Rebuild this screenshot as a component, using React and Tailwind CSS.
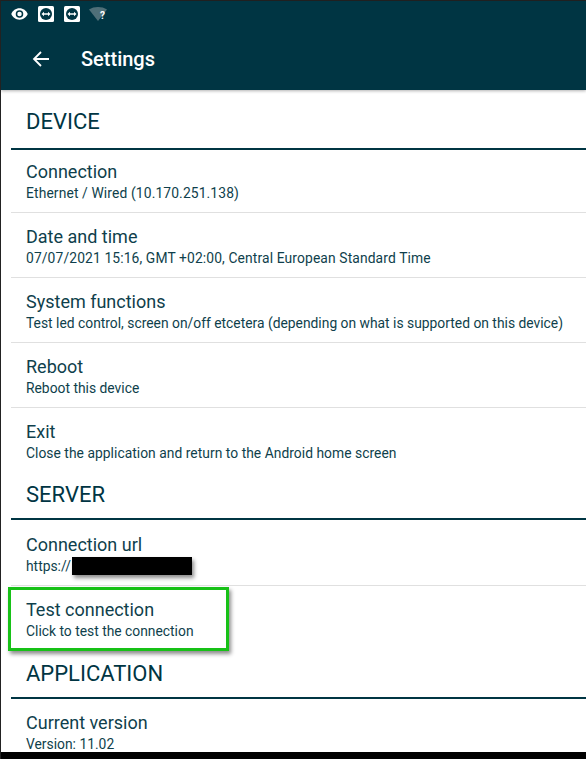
const C = "text-[#0f3f4c]";

function Heading({ children, className = "" }) {
  return (
    <div className={`ml-[10px] border-b-2 border-[#003543] pl-[15px] ${className}`}>
      <div className="text-[22px] leading-[26px] text-[#003543]">{children}</div>
    </div>
  );
}

function Row({ title, sub, divider = true, className = "", subClass = "", children }) {
  return (
    <div className={`ml-[10px] pl-[15px] ${divider ? "border-b border-[#e0e0e0]" : ""} ${className}`}>
      <div className={`text-[18px] leading-[22px] ${C}`}>{title}</div>
      <div className={`flex items-center whitespace-nowrap text-[13.85px] leading-[20px] ${C} ${subClass}`}>
        {sub}
        {children}
      </div>
    </div>
  );
}

function TeamViewer() {
  return (
    <svg width="16" height="16" viewBox="0 0 16 16">
      <rect width="16" height="16" rx="1.5" fill="#fff" />
      <circle cx="8" cy="8" r="6" fill="#003543" />
      <path d="M3.5 8 6 5.800V7.200h4V5.800L12.500 8 10 10.200V8.800H6v1.400z" fill="#fff" />
    </svg>
  );
}

export default function App() {
  return (
    <div className="flex h-[759px] w-[586px] flex-col overflow-hidden border-l border-[#222] bg-white font-['Roboto',sans-serif]">
      <div className="h-px shrink-0 bg-[#222]" />
      <header className="z-10 h-[89px] shrink-0 bg-[#003543] pl-[10px] shadow-[0_1px_3px_rgba(0,0,0,0.3)]">
        <div className="flex h-[26px] items-center gap-[10px]">
          <svg width="17" height="12" viewBox="0 0 18 12" fill="#fff">
            <path d="M9 0C5 0 1.800 2.400 0.300 6 1.800 9.600 5 12 9 12s7.200-2.400 8.700-6C16.200 2.400 13 0 9 0zm0 10a4 4 0 1 1 0-8 4 4 0 0 1 0 8zm0-6.400a2.400 2.400 0 1 0 0 4.800 2.400 2.400 0 0 0 0-4.800z" />
          </svg>
          <TeamViewer />
          <TeamViewer />
          <div className="relative ml-[-1px] h-[14px] w-[18px]">
            <svg width="18" height="14" viewBox="0 0 18 14">
              <path d="M0 2.500C5 -0.800 13 -0.800 18 2.500L9 14z" fill="#4f6f78" />
            </svg>
            <span className="absolute left-[11px] top-[3px] text-[10px] font-bold leading-[12px] text-white">?</span>
          </div>
        </div>
        <div className="mt-[4px] flex h-[56px] items-center">
          <svg className="ml-[21px]" width="18" height="18" viewBox="0 0 18 18" fill="none" stroke="#fff" strokeWidth="1.800">
            <path d="M17 9H2M9 2 2 9l7 7" />
          </svg>
          <h1 className="ml-[31px] text-[20px] font-medium leading-[26px] text-white">Settings</h1>
        </div>
      </header>

      <main className="relative flex-1 overflow-hidden">
        <Heading className="h-[60px] pt-[19px]">DEVICE</Heading>
        <Row className="h-[63px] pt-[11px]" subClass="tracking-[0.12px]" title="Connection" sub="Ethernet / Wired (10.170.251.138)" />
        <Row className="h-[65px] pt-[13px]" subClass="tracking-[0.117px]" title="Date and time" sub="07/07/2021 15:16, GMT +02:00, Central European Standard Time" />
        <Row className="h-[65px] pt-[13px]" title="System functions" sub="Test led control, screen on/off etcetera (depending on what is supported on this device)" />
        <Row className="h-[65px] pt-[13px]" title="Reboot" sub="Reboot this device" />
        <Row className="h-[58px] pt-[13px]" subClass="tracking-[0.03px]" divider={false} title="Exit" sub="Close the application and return to the Android home screen" />
        <Heading className="h-[54px] pt-[16px]">SERVER</Heading>
        <Row className="h-[66px] pt-[14px]" title="Connection url" sub="https://">
          <span className="ml-[1px] h-[18px] w-[120px] bg-black shadow-[2px_3px_4px_rgba(0,0,0,0.45)]" />
        </Row>
        <Row className="h-[59px] pt-[13px]" divider={false} title="Test connection" sub="Click to test the connection" />
        <Heading className="h-[54px] pt-[16px]">APPLICATION</Heading>
        <Row className="pt-[13px]" divider={false} title="Current version" sub="Version: 11.02" />
        <div className="absolute left-[7px] top-[497px] h-[64px] w-[221px] border-[3px] border-[#17c117] shadow-[2px_3px_4px_rgba(0,0,0,0.45)]" />
      </main>
      <div className="-ml-px h-[7px] shrink-0 bg-black" />
    </div>
  );
}
